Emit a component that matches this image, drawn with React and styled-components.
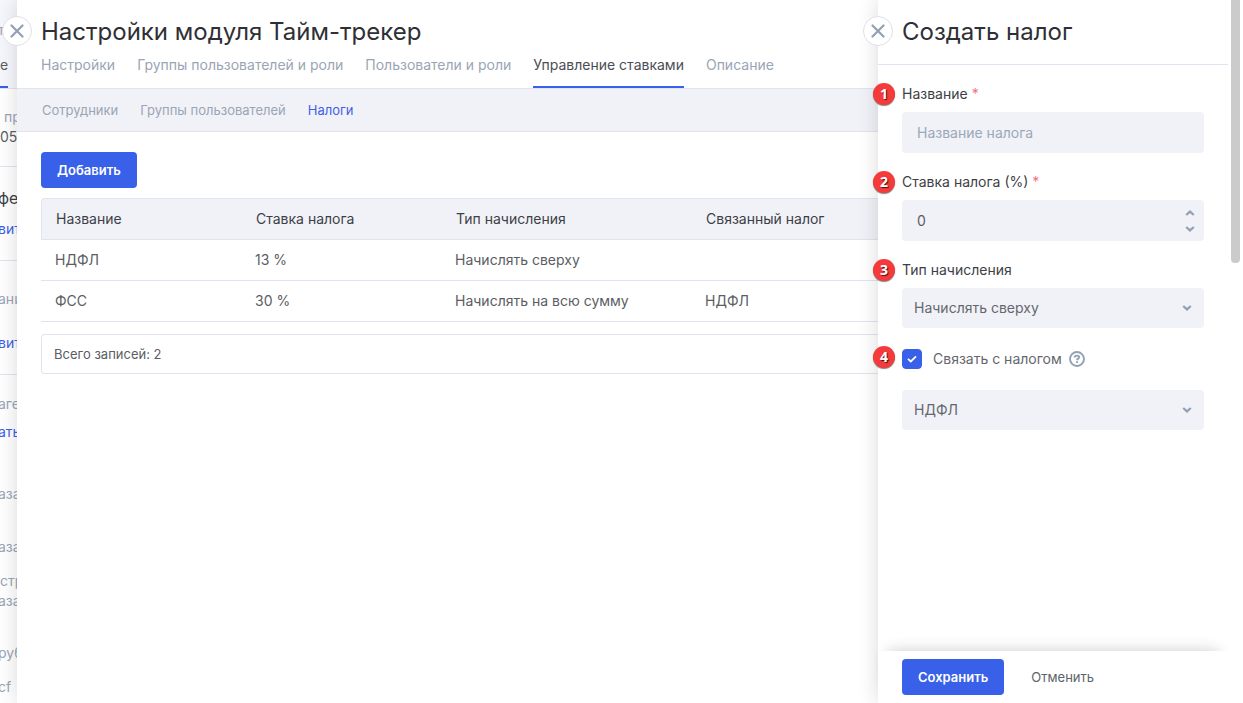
import React, { useState } from "react";
import styled, { createGlobalStyle } from "styled-components";

const GlobalStyle = createGlobalStyle`
  * {
    box-sizing: border-box;
  }

  body {
    margin: 0;
    background: #ffffff;
    color: #5b5d63;
    font-family: Inter, "Noto Sans", sans-serif;
    font-size: 14px;
    line-height: 20px;
  }

  button,
  input,
  select {
    font: inherit;
    color: inherit;
  }
`;

const Page = styled.div`
  display: grid;
  grid-template-columns: 17px minmax(0, 1fr) 365px;
  height: 100vh;
  overflow: hidden;
`;

/* page below the panels */
const Backdrop = styled.div`
  overflow: hidden;
  white-space: nowrap;
`;

const BackdropHead = styled.div`
  display: flex;
  flex-direction: column;
  justify-content: flex-end;
  height: 89px;
  background: #f6f7fc;
  border-bottom: 1px solid #e1e4f0;
`;

const BackdropMark = styled.div`
  width: 8px;
  height: 2px;
  margin-top: 11px;
  background: #3860e8;
`;

const BackdropSection = styled.div`
  height: ${({ $height }) => $height}px;
  padding-top: ${({ $top }) => $top}px;
  border-bottom: 1px solid #e1e4f0;

  &:last-child {
    height: auto;
    border-bottom: none;
  }
`;

const BackdropText = styled.div`
  margin-bottom: ${({ $space }) => $space || 0}px;
  color: ${({ $color }) => $color || "#9aa5b8"};
  font-size: ${({ $large }) => ($large ? 16 : 14)}px;
  text-indent: ${({ $indent = -2 }) => $indent}px;
`;

const Panel = styled.main`
  position: relative;
  z-index: 1;
  min-width: 0;
  background: #ffffff;
  box-shadow: 0 0 20px rgba(0, 0, 0, 0.15);
`;

const CloseButton = styled.button`
  position: absolute;
  top: 16px;
  left: -15px;
  display: flex;
  align-items: center;
  justify-content: center;
  width: 30px;
  height: 30px;
  padding: 0;
  border: 1px solid #dfe1e6;
  border-radius: 50%;
  background: #ffffff;
  color: #92a0b5;
  cursor: pointer;
`;

const Title = styled.h1`
  margin: 0;
  color: #2f3036;
  font-size: 24px;
  font-weight: 400;
  line-height: 32px;
  white-space: nowrap;
`;

const PanelHead = styled.header`
  padding: 16px 24px 0;
  border-bottom: 1px solid #e1e4f0;
`;

const Tabs = styled.nav`
  display: flex;
  gap: 22px;
  margin-top: 7px;
`;

const Tab = styled.a`
  padding-bottom: 11px;
  border-bottom: 2px solid ${({ $active }) => ($active ? "#3860e8" : "transparent")};
  color: ${({ $active }) => ($active ? "#4b4d55" : "#9aa5b5")};
  text-decoration: none;
  white-space: nowrap;
`;

const SubTabs = styled.nav`
  display: flex;
  gap: 22px;
  padding: 11px 25px;
  border-bottom: 1px solid #e1e4f0;
  background: #f1f2f8;
  font-size: 13px;
`;

const SubTab = styled.a`
  color: ${({ $active }) => ($active ? "#3f5fe8" : "#9aa5b5")};
  text-decoration: none;
  white-space: nowrap;
`;

const Content = styled.section`
  padding: 20px 0 0 24px;
`;

const PrimaryButton = styled.button`
  height: 36px;
  padding: 0 16px;
  border: none;
  border-radius: 4px;
  background: #3860e8;
  color: #ffffff;
  font-size: 13px;
  font-weight: 600;
  cursor: pointer;
`;

const TextButton = styled.button`
  height: 36px;
  padding: 0;
  border: none;
  background: none;
  color: #5b6468;
  font-size: 13px;
  cursor: pointer;
`;

const Table = styled.table`
  width: 100%;
  margin-top: 10px;
  border-spacing: 0;
  table-layout: fixed;
`;

const HeadCell = styled.th`
  width: ${({ $width }) => ($width ? `${$width}px` : "auto")};
  height: 42px;
  padding: 0 0 0 15px;
  border: solid #e1e4f0;
  border-width: 1px 0;
  background: #f1f2f8;
  color: #3d3f46;
  font-weight: 400;
  text-align: left;
  white-space: nowrap;

  &:first-child {
    padding-left: 14px;
    border-left-width: 1px;
    border-top-left-radius: 4px;
  }
`;

const Cell = styled.td`
  height: 41px;
  padding: 0 0 0 14px;
  border-bottom: 1px solid #e1e4f0;
  white-space: nowrap;
`;

const Total = styled.div`
  margin-top: 12px;
  padding: 9px 12px;
  border: 1px solid #e1e4f0;
  border-right: none;
  border-radius: 4px 0 0 4px;
  font-size: 13px;
`;

const Drawer = styled.aside`
  position: relative;
  z-index: 2;
  display: grid;
  grid-template-columns: minmax(0, 1fr) 15px;
  background: #ffffff;
  box-shadow: 0 0 20px rgba(0, 0, 0, 0.15);
`;

const Form = styled.form`
  display: flex;
  flex-direction: column;
  min-height: 0;
`;

const DrawerHead = styled.header`
  padding: 16px 24px;
  border-bottom: 1px solid #e1e4f0;
`;

const Fields = styled.div`
  flex: 1;
  padding: 19px 24px 0;
`;

const Field = styled.div`
  position: relative;
  margin-bottom: 19px;
`;

const Label = styled.label`
  display: block;
  margin-bottom: 8px;
  color: #3d3f46;
`;

const Required = styled.span`
  color: #f9707f;
`;

const Control = styled.div`
  display: grid;
  align-items: center;

  > * {
    grid-area: 1 / 1;
  }

  > svg {
    justify-self: end;
    margin-right: 12px;
    color: #92a0b5;
    pointer-events: none;
  }
`;

const Input = styled.input`
  width: 100%;
  height: 41px;
  padding: 0 15px;
  border: none;
  border-radius: 4px;
  outline: none;
  background: #f1f2f8;
  appearance: textfield;

  &::placeholder {
    color: #9ba8b8;
    opacity: 1;
  }

  &::-webkit-inner-spin-button {
    appearance: none;
    margin: 0;
  }
`;

const Select = styled.select`
  width: 100%;
  height: 40px;
  padding: 0 32px 0 12px;
  border: none;
  border-radius: 4px;
  outline: none;
  background: #f1f2f8;
  color: #65676d;
  appearance: none;
`;

const Stepper = styled.div`
  display: flex;
  flex-direction: column;
  justify-self: end;
  margin-right: 8px;
`;

const StepButton = styled.button`
  display: flex;
  align-items: center;
  justify-content: center;
  width: 12px;
  height: 16px;
  padding: 0;
  border: none;
  background: none;
  color: #92a0b5;
`;

const CheckRow = styled.div`
  display: flex;
  align-items: center;
  padding: 2px 0;
`;

const CheckBox = styled.span`
  display: grid;
  place-items: center;
  margin-right: 11px;

  > * {
    grid-area: 1 / 1;
  }

  > svg {
    color: #ffffff;
    pointer-events: none;
  }
`;

const CheckInput = styled.input`
  width: 20px;
  height: 20px;
  margin: 0;
  border: 1px solid #3860e8;
  border-radius: 4px;
  background: #ffffff;
  appearance: none;

  &:checked {
    background: #3860e8;
  }
`;

const CheckLabel = styled.label`
  margin-right: 7px;
  color: #65676d;
`;

const Badge = styled.span`
  position: absolute;
  top: -1px;
  left: -29px;
  width: 22px;
  height: 22px;
  border-radius: 50%;
  background: #f43a3a;
  box-shadow: 0 1px 1px rgba(0, 0, 0, 0.5);
  color: #ffffff;
  font-family: "Open Sans", sans-serif;
  font-size: 14px;
  font-weight: 700;
  line-height: 22px;
  text-align: center;
  text-shadow: 1px 1px 1px rgba(0, 0, 0, 0.7);
`;

const DrawerFoot = styled.footer`
  display: flex;
  gap: 27px;
  padding: 8px 24px;
  box-shadow: 0 -10px 16px -10px rgba(0, 0, 0, 0.2);
`;

const Scrollbar = styled.div`
  padding: 0 3px;
  background: #ffffff;
`;

const ScrollThumb = styled.div`
  height: 263px;
  border-radius: 0 0 4px 4px;
  background: #cbcbcb;
`;

const tabs = [
  "Настройки",
  "Группы пользователей и роли",
  "Пользователи и роли",
  "Управление ставками",
  "Описание",
];

const subTabs = ["Сотрудники", "Группы пользователей", "Налоги"];

const taxes = [
  { name: "НДФЛ", rate: 13, type: "Начислять сверху", linked: "" },
  { name: "ФСС", rate: 30, type: "Начислять на всю сумму", linked: "НДФЛ" },
];

function CloseIcon() {
  return (
    <svg width="14" height="14" viewBox="0 0 14 14" fill="none" stroke="currentColor" strokeWidth="2.200">
      <path d="M1.500 1.500 12.500 12.500M12.500 1.500 1.500 12.500" strokeLinecap="round" />
    </svg>
  );
}

function Chevron({ up }) {
  return (
    <svg width="10" height="6" viewBox="0 0 10 6" fill="none" stroke="currentColor" strokeWidth="2.200">
      <path d={up ? "M1.200 5 5 1.600 8.800 5" : "M1.200 1 5 4.400 8.800 1"} />
    </svg>
  );
}

function CheckIcon() {
  return (
    <svg width="10" height="8" viewBox="0 0 10 8" fill="none" stroke="currentColor" strokeWidth="1.800">
      <path d="M1 3.800 3.800 6.500 9 1.300" />
    </svg>
  );
}

function HelpIcon() {
  return (
    <svg width="16" height="16" viewBox="0 0 16 16" fill="none" stroke="#92a0b5" strokeWidth="1.900">
      <circle cx="8" cy="8" r="7" />
      <path d="M5.700 6.500C5.700 5.200 6.700 4.600 8 4.600s2.200.7 2.200 1.700C10.200 7.600 8 7.700 8 9.200" />
      <path d="M8 10.200v1.800" />
    </svg>
  );
}

export default function App() {
  const [name, setName] = useState("");
  const [rate, setRate] = useState(0);
  const [linked, setLinked] = useState(true);

  return (
    <Page>
      <GlobalStyle />

      <Backdrop>
        <BackdropHead>
          <BackdropText $space={15}>т</BackdropText>
          <BackdropText $color="#5b5d63" $indent={0}>е</BackdropText>
          <BackdropMark />
        </BackdropHead>
        <BackdropSection $height={78} $top={18}>
          <BackdropText $indent={4}>пр</BackdropText>
          <BackdropText $color="#5b5d63" $indent={0}>05</BackdropText>
        </BackdropSection>
        <BackdropSection $height={94} $top={21}>
          <BackdropText $color="#3d3f46" $large $space={11}>фе</BackdropText>
          <BackdropText $color="#3f5fe8">вит</BackdropText>
        </BackdropSection>
        <BackdropSection $height={114} $top={28}>
          <BackdropText $space={24}>ани</BackdropText>
          <BackdropText $color="#3f5fe8">вит</BackdropText>
        </BackdropSection>
        <BackdropSection $top={19}>
          <BackdropText $space={8}>аге</BackdropText>
          <BackdropText $color="#3f5fe8" $space={42}>ать</BackdropText>
          <BackdropText $space={33}>аза</BackdropText>
          <BackdropText $space={14}>аза</BackdropText>
          <BackdropText $indent={0}>стр</BackdropText>
          <BackdropText $space={32}>аза</BackdropText>
          <BackdropText $space={14}>руб</BackdropText>
          <BackdropText>cf</BackdropText>
        </BackdropSection>
      </Backdrop>

      <Panel>
        <CloseButton type="button" aria-label="Закрыть"><CloseIcon /></CloseButton>
        <PanelHead>
          <Title>Настройки модуля Тайм-трекер</Title>
          <Tabs>
            {tabs.map((tab) => (
              <Tab key={tab} href="#" $active={tab === "Управление ставками"}>{tab}</Tab>
            ))}
          </Tabs>
        </PanelHead>
        <SubTabs>
          {subTabs.map((tab) => (
            <SubTab key={tab} href="#" $active={tab === "Налоги"}>{tab}</SubTab>
          ))}
        </SubTabs>

        <Content>
          <PrimaryButton type="button">Добавить</PrimaryButton>
          <Table>
            <thead>
              <tr>
                <HeadCell $width={200}>Название</HeadCell>
                <HeadCell $width={200}>Ставка налога</HeadCell>
                <HeadCell $width={250}>Тип начисления</HeadCell>
                <HeadCell>Связанный налог</HeadCell>
              </tr>
            </thead>
            <tbody>
              {taxes.map((tax) => (
                <tr key={tax.name}>
                  <Cell>{tax.name}</Cell>
                  <Cell>{tax.rate} %</Cell>
                  <Cell>{tax.type}</Cell>
                  <Cell>{tax.linked}</Cell>
                </tr>
              ))}
            </tbody>
          </Table>
          <Total>Всего записей: {taxes.length}</Total>
        </Content>
      </Panel>

      <Drawer>
        <CloseButton type="button" aria-label="Закрыть"><CloseIcon /></CloseButton>
        <Form onSubmit={(e) => e.preventDefault()}>
          <DrawerHead>
            <Title as="h2">Создать налог</Title>
          </DrawerHead>
          <Fields>
            <Field>
              <Badge>1</Badge>
              <Label htmlFor="name">Название <Required>*</Required></Label>
              <Input
                id="name"
                placeholder="Название налога"
                value={name}
                onChange={(e) => setName(e.target.value)}
              />
            </Field>
            <Field>
              <Badge>2</Badge>
              <Label htmlFor="rate">Ставка налога (%) <Required>*</Required></Label>
              <Control>
                <Input
                  id="rate"
                  type="number"
                  value={rate}
                  onChange={(e) => setRate(Number(e.target.value))}
                />
                <Stepper>
                  <StepButton type="button" aria-label="Больше" onClick={() => setRate(rate + 1)}><Chevron up /></StepButton>
                  <StepButton type="button" aria-label="Меньше" onClick={() => setRate(rate - 1)}><Chevron /></StepButton>
                </Stepper>
              </Control>
            </Field>
            <Field>
              <Badge>3</Badge>
              <Label htmlFor="type">Тип начисления</Label>
              <Control>
                <Select id="type">
                  <option>Начислять сверху</option>
                  <option>Начислять на всю сумму</option>
                </Select>
                <Chevron />
              </Control>
            </Field>
            <Field>
              <Badge>4</Badge>
              <CheckRow>
                <CheckBox>
                  <CheckInput
                    id="linked"
                    type="checkbox"
                    checked={linked}
                    onChange={(e) => setLinked(e.target.checked)}
                  />
                  <CheckIcon />
                </CheckBox>
                <CheckLabel htmlFor="linked">Связать с налогом</CheckLabel>
                <HelpIcon />
              </CheckRow>
            </Field>
            {linked && (
              <Control>
                <Select aria-label="Связанный налог">
                  {taxes.map((tax) => <option key={tax.name}>{tax.name}</option>)}
                </Select>
                <Chevron />
              </Control>
            )}
          </Fields>
          <DrawerFoot>
            <PrimaryButton type="submit">Сохранить</PrimaryButton>
            <TextButton type="button">Отменить</TextButton>
          </DrawerFoot>
        </Form>
        <Scrollbar><ScrollThumb /></Scrollbar>
      </Drawer>
    </Page>
  );
}
